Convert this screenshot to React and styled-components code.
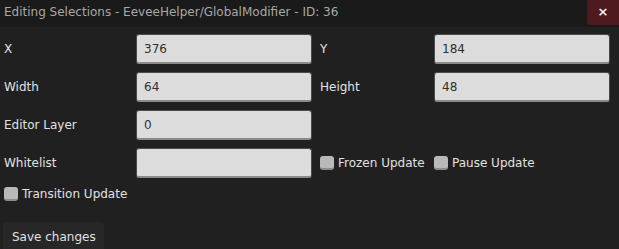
import React from "react";
import styled, { createGlobalStyle } from "styled-components";

const Global = createGlobalStyle`
  html, body { margin: 0; padding: 0; background: #202020; overflow: hidden; }
  body { font-family: "DejaVu Sans", sans-serif; font-size: 12px; }
`;

const Window = styled.div`
  width: 619px;
  height: 249px;
  background: #202020;
  display: flex;
  flex-direction: column;
  overflow: hidden;
`;

const TitleBar = styled.div`
  height: 27px;
  flex-shrink: 0;
  background: #1a1a1a;
  display: flex;
  align-items: flex-start;
  justify-content: space-between;
`;

const Title = styled.div`
  color: #a8a8a8;
  padding: 5px 0 0 4px;
  font-size: 12px;
  line-height: 15px;
  white-space: nowrap;
`;

const CloseButton = styled.button`
  width: 32px;
  height: 25px;
  border: none;
  border-bottom-left-radius: 3px;
  background: #4e1a20;
  color: #f0f0f0;
  font-family: "DejaVu Sans", sans-serif;
  font-size: 13px;
  font-weight: bold;
  padding: 0 0 3px 0;
  display: flex;
  align-items: center;
  justify-content: center;
`;

const Body = styled.div`
  padding: 7px 0 0 4px;
  display: flex;
  flex-direction: column;
`;

const Grid = styled.div`
  display: grid;
  grid-template-columns: 124px 176px 106px 176px;
  column-gap: 8px;
  row-gap: 8px;
  align-items: center;
`;

const Label = styled.div`
  color: #e2e2e2;
  white-space: nowrap;
`;

const Input = styled.div`
  height: 30px;
  box-sizing: border-box;
  background: #dcdcdc;
  border-radius: 3px;
  border: 1px solid #4a4a4a;
  border-bottom: 2px solid #8a8a8a;
  color: #303030;
  display: flex;
  align-items: center;
  padding: 0 7px;
`;

const Check = styled.label`
  display: flex;
  align-items: center;
  gap: 4px;
  color: #e2e2e2;
  white-space: nowrap;
`;

const Box = styled.span`
  width: 14px;
  height: 14px;
  box-sizing: border-box;
  background: #b9b9b9;
  border-radius: 3px;
  border-bottom: 2px solid #8c8c8c;
  display: inline-block;
`;

const CheckRow = styled.div`
  display: flex;
  height: 16px;
  align-items: center;
  margin-top: 8px;
`;

const SaveButton = styled.button`
  margin: 20px 0 0 -1px;
  width: 101px;
  height: 30px;
  flex-shrink: 0;
  border: none;
  border-radius: 3px;
  background: #272727;
  color: #e2e2e2;
  font-family: "DejaVu Sans", sans-serif;
  font-size: 12px;
  text-align: left;
  padding: 8px 0 0 9px;
  align-self: flex-start;
  display: flex;
  align-items: flex-start;
`;

const CheckItem = ({ children }) => (
  <Check>
    <Box />
    {children}
  </Check>
);

export default function App() {
  return (
    <Window>
      <Global />
      <TitleBar>
        <Title>Editing Selections - EeveeHelper/GlobalModifier - ID: 36</Title>
        <CloseButton>×</CloseButton>
      </TitleBar>
      <Body>
        <Grid>
          <Label>X</Label>
          <Input>376</Input>
          <Label>Y</Label>
          <Input>184</Input>
          <Label>Width</Label>
          <Input>64</Input>
          <Label>Height</Label>
          <Input>48</Input>
          <Label>Editor Layer</Label>
          <Input>0</Input>
          <span />
          <span />
          <Label>Whitelist</Label>
          <Input />
          <CheckItem>Frozen Update</CheckItem>
          <CheckItem>Pause Update</CheckItem>
        </Grid>
        <CheckRow>
          <CheckItem>Transition Update</CheckItem>
        </CheckRow>
        <SaveButton>Save changes</SaveButton>
      </Body>
    </Window>
  );
}
